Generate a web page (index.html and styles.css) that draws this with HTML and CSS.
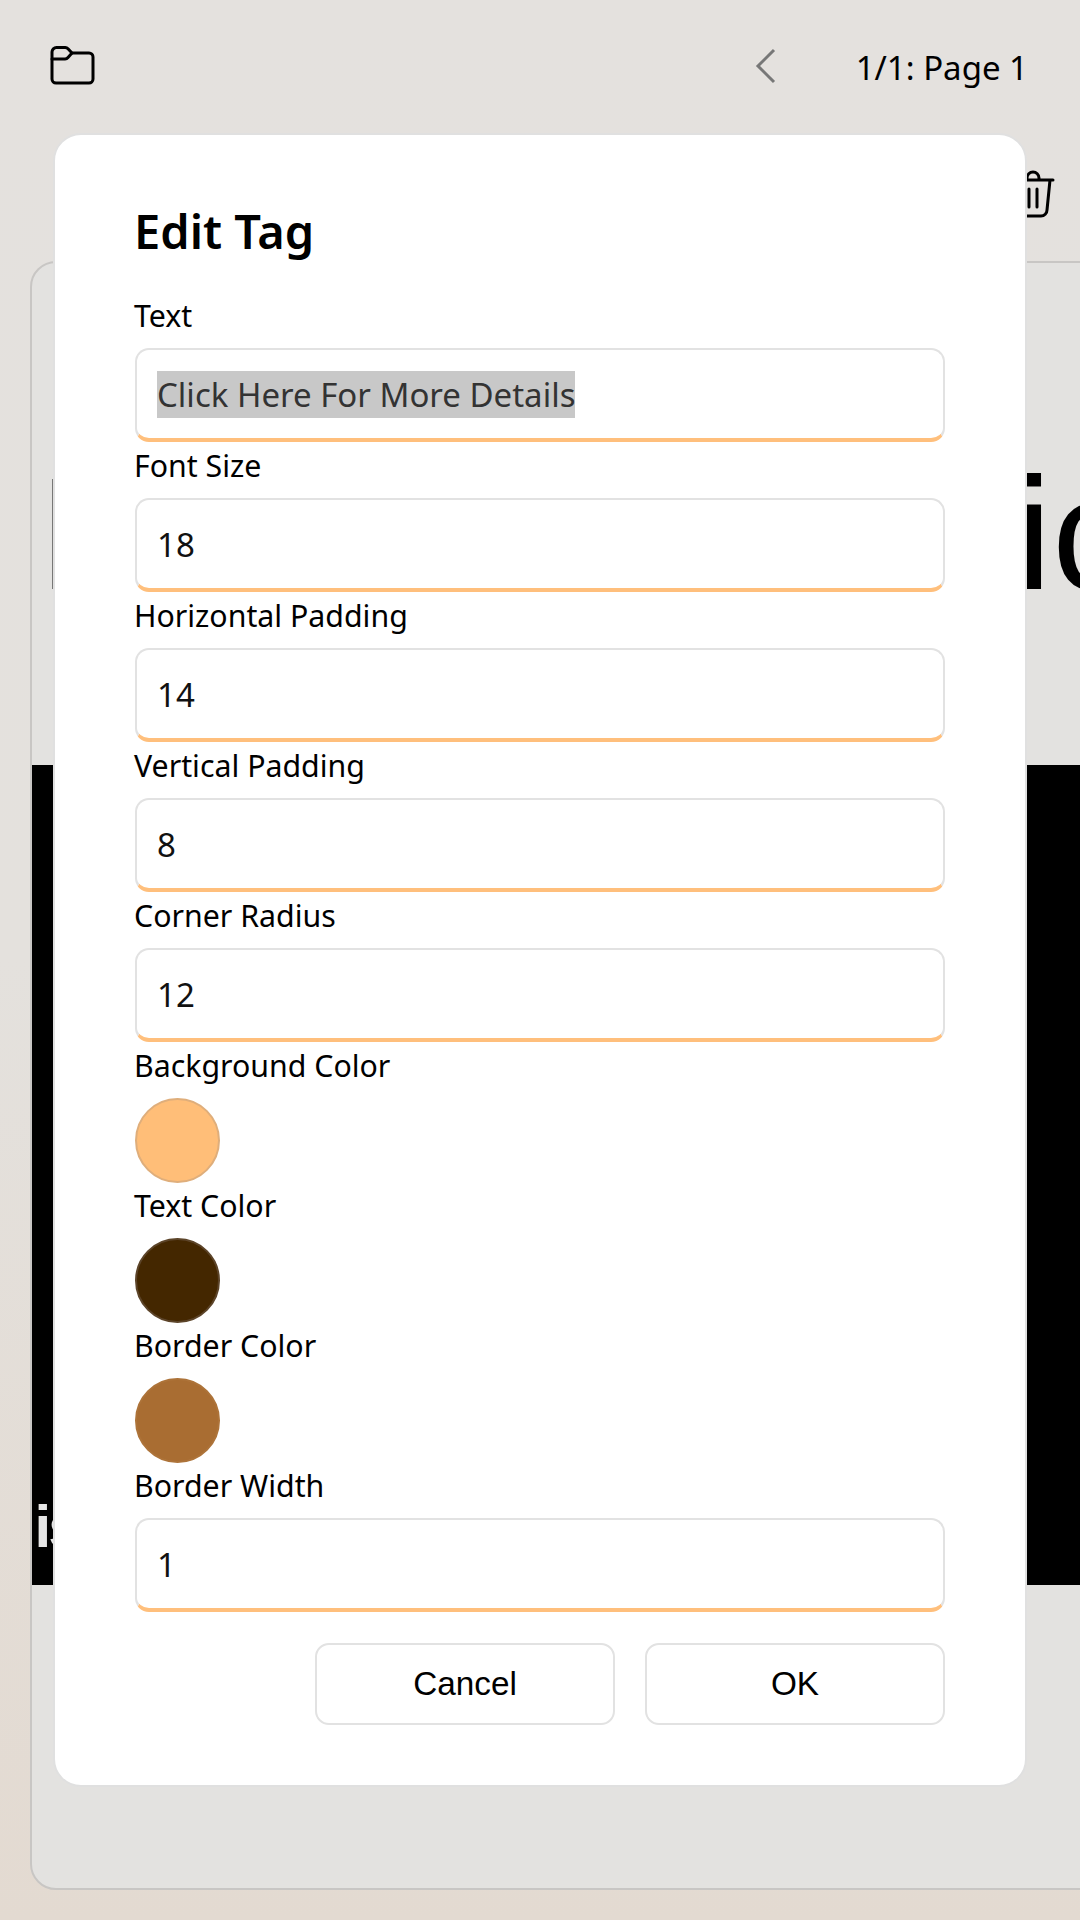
FILE: index.html
```html
<!DOCTYPE html>
<html lang="en">
<head>
<meta charset="utf-8">
<title>Edit Tag</title>
<link rel="stylesheet" href="styles.css">
</head>
<body>
<div class="screen">
  <header class="topbar">
    <svg class="icon-folder" viewBox="0 0 46 40" fill="none" stroke="#000" stroke-width="3" stroke-linejoin="round" stroke-linecap="round">
      <path d="M2 11V6a4.500 4.500 0 0 1 4.500-4.500H15a4 4 0 0 1 3 1.200L22 7H39a4 4 0 0 1 4 4V33a4 4 0 0 1-4 4H6a4 4 0 0 1-4-4Z"/>
      <path d="M2 13H15a4 4 0 0 0 3-1.500L22 7"/>
    </svg>
    <div class="pager">
      <svg class="icon-back" viewBox="0 0 22 36" fill="none" stroke="#777" stroke-width="3"><path d="M19 2 3 18l16 16"/></svg>
      <span class="page-label">1/1: Page 1</span>
    </div>
  </header>
  <div class="toolbar">
    <svg class="icon-trash" viewBox="0 0 44 48" fill="none" stroke="#000" stroke-width="3" stroke-linecap="round" stroke-linejoin="round">
      <path d="M2 10H42M16 10V8a6 6 0 0 1 12 0v2M7 10l3 30a6 6 0 0 0 6 6H30a6 6 0 0 0 6-6l3-30M18 19V37M26 19V37"/>
    </svg>
  </div>
  <main class="card">
    <div class="heading"><span>I</span><span class="heading-tail">ic</span></div>
    <div class="stage"><span class="caption">is</span></div>
  </main>
</div>

<section class="dialog">
  <h1 class="dialog-title">Edit Tag</h1>
  <div class="label">Text</div>
  <div class="field muted"><span class="selected">Click Here For More Details</span></div>
  <div class="label">Font Size</div>
  <div class="field">18</div>
  <div class="label">Horizontal Padding</div>
  <div class="field">14</div>
  <div class="label">Vertical Padding</div>
  <div class="field">8</div>
  <div class="label">Corner Radius</div>
  <div class="field">12</div>
  <div class="label">Background Color</div>
  <div class="swatch swatch-bg"></div>
  <div class="label">Text Color</div>
  <div class="swatch swatch-text"></div>
  <div class="label">Border Color</div>
  <div class="swatch swatch-border"></div>
  <div class="label">Border Width</div>
  <div class="field">1</div>
  <div class="actions">
    <button class="btn">Cancel</button>
    <button class="btn">OK</button>
  </div>
</section>
</body>
</html>
```
FILE: styles.css
```css
* { box-sizing: border-box; }
html, body { margin: 0; padding: 0; }
body {
  position: relative;
  width: 1080px;
  height: 1920px;
  overflow: hidden;
  font-family: "Noto Sans", sans-serif;
  color: #000;
  background: linear-gradient(180deg, #e4e1de 0%, #e4e1dd 50%, #e3dad1 100%);
}
.screen { display: flex; flex-direction: column; height: 100%; }
.topbar {
  height: 135px;
  display: flex;
  align-items: flex-start;
  justify-content: space-between;
  padding: 46px 52px 0 50px;
}
.icon-folder { width: 46px; height: 40px; display: block; }
.pager { display: flex; align-items: flex-start; }
.icon-back { width: 22px; height: 36px; margin: 2px 79px 0 0; display: block; }
.page-label { font-size: 33px; line-height: 44px; }
.toolbar {
  height: 126px;
  display: flex;
  justify-content: flex-end;
  align-items: flex-start;
  padding: 35px 25px 0 0;
}
.icon-trash { width: 44px; height: 48px; display: block; }
.card {
  flex: 1;
  width: 1100px;
  margin: 0 0 30px 30px;
  border: 2px solid #c8c6c4;
  border-radius: 26px;
  background: #e3e2e0;
  overflow: hidden;
}
.heading {
  height: 502px;
  padding: 179px 0 0 5.700px;
  display: flex;
  align-items: flex-start;
  font-family: "Liberation Sans", sans-serif;
  font-size: 160px;
  line-height: 184px;
  white-space: nowrap;
}
.heading-tail { margin-left: 934.200px; }
.stage {
  height: 820px;
  background: #000;
  padding: 727px 0 0 2.500px;
}
.caption {
  display: block;
  font-family: "Liberation Sans", sans-serif;
  font-size: 60px;
  font-weight: 700;
  letter-spacing: -3px;
  line-height: 70px;
  color: #e6e6e6;
}
.dialog {
  position: absolute;
  left: 53px;
  top: 133px;
  width: 974px;
  height: 1654px;
  padding: 44px 80px 0;
  background: #fff;
  border: 2px solid #e0e0e0;
  border-radius: 28px;
}
.dialog-title {
  margin: 0 0 0 -1px;
  height: 113px;
  padding-top: 20px;
  font-size: 47px;
  line-height: 64px;
  font-weight: 600;
}
.label {
  height: 56px;
  font-size: 30.300px;
  line-height: 47px;
  margin-left: -1px;
}
.field {
  height: 94px;
  border: 2px solid #e2e2e2;
  border-bottom: 4px solid #ffbf7c;
  border-radius: 14px;
  padding: 0 20px;
  display: flex;
  align-items: center;
  font-size: 33px;
  color: #111;
  background: #fff;
}
.field.muted { color: #333; }
.selected { background: #c8c8c8; line-height: 47px; }
.swatch {
  width: 85px;
  height: 85px;
  margin-bottom: -1px;
  border-radius: 50%;
  border: 2px solid;
}
.swatch-bg { background: #ffbe78; border-color: #dfae7b; }
.swatch-text { background: #442700; border-color: #5c4429; }
.swatch-border { background: #a96d32; border-color: #ad7339; }
.actions {
  display: flex;
  justify-content: flex-end;
  gap: 30px;
  margin-top: 31px;
}
.btn {
  width: 300px;
  height: 82px;
  padding: 0;
  background: #fff;
  border: 2px solid #e2e2e2;
  border-radius: 14px;
  font-family: "Liberation Sans", sans-serif;
  font-size: 33.300px;
  color: #000;
}
```
